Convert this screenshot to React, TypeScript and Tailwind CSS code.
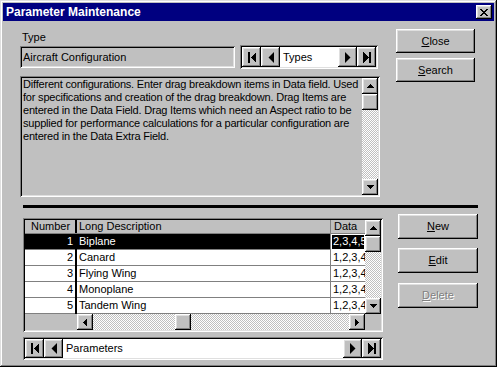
import React from "react";

// Win95-style bevels
const raised =
  "bg-[#c0c0c0] shadow-[inset_-1px_-1px_#000,inset_1px_1px_#fff,inset_-2px_-2px_#808080,inset_2px_2px_#dfdfdf]";
const sunken =
  "shadow-[inset_1px_1px_#808080,inset_-1px_-1px_#fff,inset_2px_2px_#000,inset_-2px_-2px_#dfdfdf]";
const checker =
  "bg-[#c0c0c0] bg-[image:repeating-conic-gradient(#c0c0c0_0%_25%,#fff_0%_50%)] bg-[length:2px_2px]";

function Arrow({ dir }: { dir: "up" | "down" | "left" | "right" }) {
  const d = {
    up: "M3 0h1v1H3zM2 1h3v1H2zM1 2h5v1H1zM0 3h7v1H0z",
    down: "M0 0h7v1H0zM1 1h5v1H1zM2 2h3v1H2zM3 3h1v1H3z",
    left: "M3 0h1v7H3zM2 1h1v5H2zM1 2h1v3H1zM0 3h1v1H0z",
    right: "M0 0h1v7H0zM1 1h1v5H1zM2 2h1v3H2zM3 3h1v1H3z",
  }[dir];
  const vertical = dir === "up" || dir === "down";
  return (
    <svg width={vertical ? 7 : 4} height={vertical ? 4 : 7} shapeRendering="crispEdges">
      <path d={d} fill="#000" />
    </svg>
  );
}

function NavGlyph({ kind }: { kind: "first" | "prev" | "next" | "last" }) {
  if (kind === "first")
    return (
      <svg width="8" height="11" shapeRendering="crispEdges">
        <rect x="0" y="0" width="2" height="11" fill="#000" />
        <polygon points="8,0 8,11 2.5,5.5" fill="#000" />
      </svg>
    );
  if (kind === "prev")
    return (
      <svg width="6" height="11">
        <polygon points="6,0 6,11 0.5,5.5" fill="#000" />
      </svg>
    );
  if (kind === "next")
    return (
      <svg width="6" height="11">
        <polygon points="0,0 0,11 5.5,5.5" fill="#000" />
      </svg>
    );
  return (
    <svg width="8" height="11" shapeRendering="crispEdges">
      <polygon points="0,0 0,11 5.5,5.5" fill="#000" />
      <rect x="6" y="0" width="2" height="11" fill="#000" />
    </svg>
  );
}

function NavBar({ label, textWidth }: { label: string; textWidth: string }) {
  return (
    <div className={`${sunken} bg-[#c0c0c0] p-[2px] flex h-full`}>
      <div className={`${raised} w-[19px] flex items-center justify-center`}>
        <NavGlyph kind="first" />
      </div>
      <div className={`${raised} w-[19px] flex items-center justify-center`}>
        <NavGlyph kind="prev" />
      </div>
      <div className={`bg-white ${textWidth} pl-[3px] flex items-center`}>{label}</div>
      <div className={`${raised} w-[19px] flex items-center justify-center`}>
        <NavGlyph kind="next" />
      </div>
      <div className={`${raised} w-[19px] flex items-center justify-center`}>
        <NavGlyph kind="last" />
      </div>
    </div>
  );
}

function Button({ hot, rest, h, disabled }: { hot: string; rest: string; h: string; disabled?: boolean }) {
  return (
    <div
      className={`${raised} ${h} flex items-center justify-center ${
        disabled ? "text-[#808080] [text-shadow:1px_1px_#fff]" : ""
      }`}
    >
      <span>
        <span className="underline underline-offset-[1px]">{hot}</span>
        {rest}
      </span>
    </div>
  );
}

const rows = [
  { n: 1, desc: "Biplane", data: "2,3,4,5" },
  { n: 2, desc: "Canard", data: "1,2,3,4" },
  { n: 3, desc: "Flying Wing", data: "1,2,3,4" },
  { n: 4, desc: "Monoplane", data: "1,2,3,4" },
  { n: 5, desc: "Tandem Wing", data: "1,2,3,4" },
];

export default function App() {
  return (
    <div className="w-[497px] h-[367px] bg-[#c0c0c0] p-[3px] flex flex-col shadow-[inset_-1px_-1px_#000,inset_1px_1px_#dfdfdf,inset_-2px_-2px_#808080,inset_2px_2px_#fff] font-['Liberation_Sans',Arial,sans-serif] text-[11px] text-black leading-none">
      {/* Title bar */}
      <div className="h-[18px] shrink-0 bg-[#000080] flex items-center justify-between pl-[3px] pr-[2px]">
        <span className="text-white font-bold text-[12px]">Parameter Maintenance</span>
        <div className={`${raised} w-[16px] h-[14px] flex items-center justify-center`}>
          <svg width="8" height="7" shapeRendering="crispEdges">
            <path
              d="M0 0h2v1H0zM6 0h2v1H6zM1 1h2v1H1zM5 1h2v1H5zM2 2h4v1H2zM3 3h2v1H3zM2 4h4v1H2zM1 5h2v1H1zM5 5h2v1H5zM0 6h2v1H0zM6 6h2v1H6z"
              fill="#000"
            />
          </svg>
        </div>
      </div>

      <div className="flex-1 flex flex-col pl-[17px] pt-[8px]">
        {/* Top section */}
        <div className="flex">
          <div className="w-[360px] flex flex-col">
            <div className="h-[16px] pl-[2px] flex items-center">Type</div>
            <div className="h-[24px] flex items-center gap-[5px]">
              <div className={`${sunken} w-[215px] h-[22px] pl-[3px] flex items-center`}>
                Aircraft Configuration
              </div>
              <div className="h-[24px] w-[138px]">
                <NavBar label="Types" textWidth="w-[58px]" />
              </div>
            </div>
            <div className={`${sunken} mt-[7px] h-[121px] p-[2px] flex`}>
              <div className="flex-1 pl-[1px] leading-[13px] tracking-[-0.2px] whitespace-nowrap overflow-hidden">
                Different configurations. Enter drag breakdown items in Data field. Used
                <br />
                for specifications and creation of the drag breakdown. Drag Items are
                <br />
                entered in the Data Field. Drag Items which need an Aspect ratio to be
                <br />
                supplied for performance calculations for a particular configuration are
                <br />
                entered in the Data Extra Field.
              </div>
              <div className="w-[16px] flex flex-col">
                <div className={`${raised} h-[16px] flex items-center justify-center`}>
                  <Arrow dir="up" />
                </div>
                <div className={`${raised} h-[16px]`} />
                <div className={`${checker} flex-1`} />
                <div className={`${raised} h-[16px] flex items-center justify-center`}>
                  <Arrow dir="down" />
                </div>
              </div>
            </div>
          </div>
          <div className="ml-[16px] w-[79px] flex flex-col gap-[5px]">
            <Button hot="C" rest="lose" h="h-[24px]" />
            <Button hot="S" rest="earch" h="h-[24px]" />
          </div>
        </div>

        {/* Separator */}
        <div className="mt-[8px] ml-[3px] w-[455px] h-[3px] bg-black" />

        {/* Bottom section */}
        <div className="flex mt-[6px]">
          <div className="ml-[3px] w-[360px] flex flex-col pt-[4px]">
            <div className={`${sunken} bg-[#c0c0c0] p-[2px] h-[114px] flex flex-col`}>
              <div className="flex h-[94px]">
                <div className="flex flex-col w-[340px]">
                  <div className="flex h-[14px] border-b border-[#808080]">
                    <div className="w-[50px] flex items-center justify-center pl-[1px]">Number</div>
                    <div className="w-[2px] bg-black" />
                    <div className="w-[254px] pl-[2px] flex items-center border-r border-[#808080]">
                      Long Description
                    </div>
                    <div className="w-[34px] pl-[3px] flex items-center">Data</div>
                  </div>
                  {rows.map((r, i) => {
                    const sel = i === 0;
                    return (
                      <div key={r.n} className="flex h-[16px]">
                        <div
                          className={`w-[50px] pr-[2px] flex items-center justify-end border-b border-[#808080] ${
                            sel ? "bg-black text-white" : "bg-white"
                          }`}
                        >
                          {r.n}
                        </div>
                        <div className="w-[2px] bg-black" />
                        <div
                          className={`w-[254px] pl-[2px] flex items-center border-b border-r border-[#808080] ${
                            sel ? "bg-black text-white" : "bg-white"
                          }`}
                        >
                          {r.desc}
                        </div>
                        <div
                          className={`w-[34px] pl-[2px] flex items-center overflow-hidden whitespace-nowrap border-b border-[#808080] ${
                            sel ? "bg-black text-white outline outline-1 -outline-offset-1 outline-white" : "bg-white"
                          }`}
                        >
                          {r.data}
                        </div>
                      </div>
                    );
                  })}
                </div>
                <div className="w-[16px] flex flex-col">
                  <div className={`${raised} h-[16px] flex items-center justify-center`}>
                    <Arrow dir="up" />
                  </div>
                  <div className={`${raised} h-[16px]`} />
                  <div className={`${checker} flex-1`} />
                  <div className={`${raised} h-[16px] flex items-center justify-center`}>
                    <Arrow dir="down" />
                  </div>
                </div>
              </div>
              <div className="flex h-[16px]">
                <div className="w-[52px]" />
                <div className="w-[288px] flex">
                  <div className={`${raised} w-[16px] flex items-center justify-center`}>
                    <Arrow dir="left" />
                  </div>
                  <div className={`${checker} w-[82px]`} />
                  <div className={`${raised} w-[16px]`} />
                  <div className={`${checker} flex-1`} />
                  <div className={`${raised} w-[16px] flex items-center justify-center`}>
                    <Arrow dir="right" />
                  </div>
                </div>
                <div className="w-[16px]" />
              </div>
            </div>
            <div className="mt-[5px] h-[23px]">
              <NavBar label="Parameters" textWidth="flex-1" />
            </div>
          </div>
          <div className="ml-[15px] w-[80px] flex flex-col">
            <Button hot="N" rest="ew" h="h-[25px]" />
            <div className="mt-[9px]">
              <Button hot="E" rest="dit" h="h-[25px]" />
            </div>
            <div className="mt-[10px]">
              <Button hot="D" rest="elete" h="h-[25px]" disabled />
            </div>
          </div>
        </div>
      </div>
    </div>
  );
}
